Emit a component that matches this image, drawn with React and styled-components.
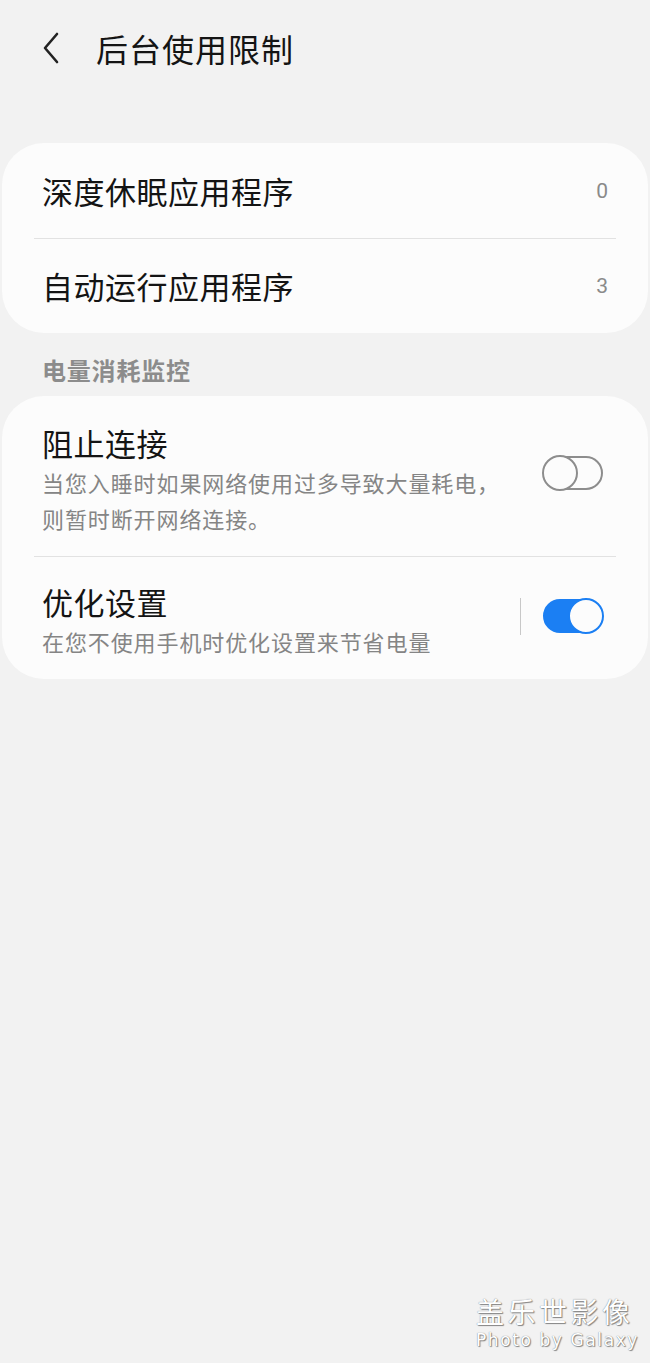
import styled, { createGlobalStyle } from "styled-components";

const Global = createGlobalStyle`
  html, body { margin: 0; padding: 0; background: #f2f2f2; }
  body { font-family: "Noto Sans CJK SC", "Noto Sans", sans-serif; color: #111; }
`

const Page = styled.div`position: relative; min-height: 1363px; background: #f2f2f2; overflow: hidden;`
const Header = styled.div`display: flex; align-items: center; height: 96px; padding-left: 40px; padding-bottom: 47px;`
const BackBtn = styled.div`display: flex; width: 28px; height: 34px; align-items: center; margin-right: 28px;`
const Title = styled.h1`margin: 0; font-size: 32px; font-weight: 400; line-height: 40px; color: #141414; letter-spacing: 1px;`
const Card = styled.div`margin: 0 2px; background: #fcfcfc; border-radius: 42px; overflow: hidden;`
const Row = styled.div`display: flex; align-items: center; padding: 0 40px; height: ${p => p.h || 95}px;`
const Divider = styled.div`height: 1px; background: #e2e2e2; margin: 0 32px;`
const RowTitle = styled.div`flex: 1; font-size: 31px; line-height: 38px; letter-spacing: 0.5px; color: #141414;`
const Count = styled.div`font-family: "Roboto", "Noto Sans", sans-serif; font-size: 21px; color: #8a8a8a;`
const Section = styled.div`padding: 21px 42px 11px; height: 31px; font-size: 24px; font-weight: 700; color: #8c8c8c; line-height: 31px; letter-spacing: 0.8px;`
const SwitchRow = styled.div`display: flex; align-items: center; padding: ${p => p.pad}; padding-left: 40px; padding-right: 45px;`
const TextCol = styled.div`flex: 1; display: flex; flex-direction: column; gap: 2px;`
const Sub = styled.div`font-size: 22px; line-height: 36px; color: #858585; letter-spacing: 0.9px;`
const Controls = styled.div`display: flex; align-items: center; margin-bottom: ${p => p.lift}px;`
const VLine = styled.div`width: 1px; height: 37px; background: #c8c8c8; margin-right: 22px;`
const Track = styled.div`
  position: relative; width: 60px; height: 34px; box-sizing: border-box; border-radius: 17px;
  background: ${p => p.on ? "#1b7ff3" : "transparent"};
  border: 2px solid ${p => p.on ? "#1b7ff3" : "#8d8d8d"};
`
const Thumb = styled.div`
  position: absolute; top: -3px; ${p => p.on ? "right: -3px;" : "left: -3px;"}
  width: 36px; height: 36px; box-sizing: border-box; border-radius: 50%;
  background: #fcfcfc; border: 2px solid ${p => p.on ? "#1b7ff3" : "#8d8d8d"};
`
const Mark = styled.div`
  position: absolute; right: 11px; bottom: 13px; display: flex; flex-direction: column; gap: 6px;
  color: #fff; text-shadow: 0 0 1px #666, 1px 1px 1px #888;
`
const MarkCn = styled.div`font-size: 28px; line-height: 28px; letter-spacing: 3.5px;`
const MarkEn = styled.div`font-family: "DejaVu Sans", sans-serif; font-size: 17px; line-height: 19px; letter-spacing: 1.6px;`

const Switch = ({ on }) => (
    <Track on={on ? 1 : 0}>
        <Thumb on={on ? 1 : 0} />
    </Track>
)

const App = () => {
    return (
        <Page>
            <Global />
            <Header>
                <BackBtn>
                    <svg width="22" height="34" viewBox="0 0 22 34">
                        <polyline points="17,3 5,17 17,31" fill="none" stroke="#222" strokeWidth="2.6" strokeLinecap="round" strokeLinejoin="round" />
                    </svg>
                </BackBtn>
                <Title>后台使用限制</Title>
            </Header>
            <Card>
                <Row>
                    <RowTitle>深度休眠应用程序</RowTitle>
                    <Count>0</Count>
                </Row>
                <Divider />
                <Row h={94}>
                    <RowTitle>自动运行应用程序</RowTitle>
                    <Count>3</Count>
                </Row>
            </Card>
            <Section>电量消耗监控</Section>
            <Card>
                <SwitchRow pad="28px 0 20px">
                    <TextCol>
                        <RowTitle>阻止连接</RowTitle>
                        <Sub>当您入睡时如果网络使用过多导致大量耗电，<br />则暂时断开网络连接。</Sub>
                    </TextCol>
                    <Controls lift={14}>
                        <Switch />
                    </Controls>
                </SwitchRow>
                <Divider />
                <SwitchRow pad="26px 0 20px">
                    <TextCol>
                        <RowTitle>优化设置</RowTitle>
                        <Sub>在您不使用手机时优化设置来节省电量</Sub>
                    </TextCol>
                    <Controls lift={10}>
                        <VLine />
                        <Switch on />
                    </Controls>
                </SwitchRow>
            </Card>
            <Mark>
                <MarkCn>盖乐世影像</MarkCn>
                <MarkEn>Photo by Galaxy</MarkEn>
            </Mark>
        </Page>
    )
}

export default App
